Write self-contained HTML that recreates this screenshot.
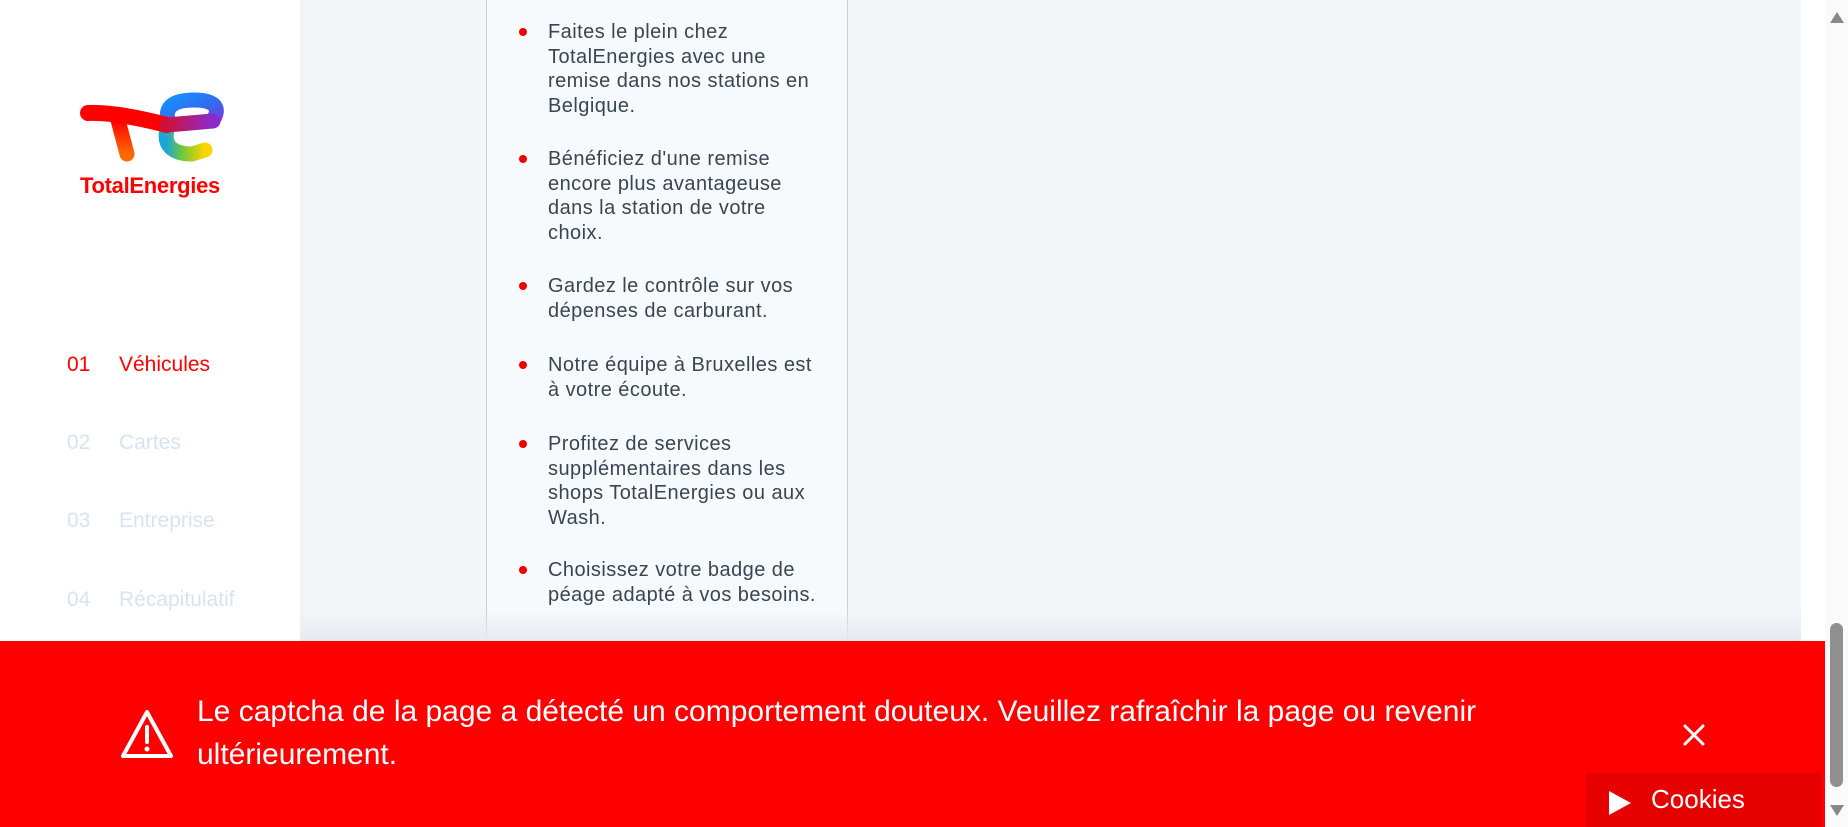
<!DOCTYPE html>
<html><head><meta charset="utf-8"><style>
*{margin:0;padding:0;box-sizing:border-box}
body{width:1848px;height:827px;overflow:hidden;position:relative;background:#fff;font-family:"Liberation Sans",Arial,sans-serif}
.side{position:absolute;left:0;top:0;width:300px;height:827px;background:#fff}
.main{position:absolute;left:300px;top:0;width:1501px;height:827px;background:#f3f6f9}
.col{position:absolute;left:486px;top:0;width:362px;height:660px;background:#f7fafc;border-left:1px solid #c5d3dc;border-right:1px solid #c5d3dc}
.it{position:absolute;left:548px;font-size:20px;letter-spacing:0.45px;line-height:24.5px;color:#3a4552;white-space:nowrap}
.dot{position:absolute;left:519px;width:8px;height:8px;border-radius:50%;background:#e00}
.step{position:absolute;font-size:21px;line-height:24px;color:#d7e3ee;white-space:nowrap}
.step.a{color:#f00}
.sb{position:absolute;left:1825px;top:0;width:23px;height:827px;background:#fafafa}
.ban{position:absolute;left:0;top:641px;width:1825px;height:186px;background:#f00}
.shade{position:absolute;left:300px;top:610px;width:1501px;height:31px;background:linear-gradient(#f3f6f900,#e6eaee)}
.msg{position:absolute;left:197px;top:690px;font-size:30px;line-height:43px;color:#fff;white-space:nowrap}
.ck{position:absolute;left:1586px;top:773px;width:235px;height:54px;background:#e60000;color:#fff;font-size:26px}
</style></head><body>
<div class="side">
<svg style="position:absolute;left:70px;top:85px" width="160" height="90" viewBox="70 85 160 90">
<defs>
<linearGradient id="g1" x1="0" y1="0" x2="0" y2="1"><stop offset="0" stop-color="#f00"/><stop offset="1" stop-color="#ff6a00"/></linearGradient>
<linearGradient id="g2" x1="0" y1="0" x2="1" y2="1"><stop offset="0" stop-color="#1a8cff"/><stop offset="0.5" stop-color="#2f6df0"/><stop offset="1" stop-color="#7a3bd6"/></linearGradient>
<linearGradient id="g3" x1="0" y1="0" x2="1" y2="0"><stop offset="0" stop-color="#1aa6d8"/><stop offset="0.4" stop-color="#6cc83c"/><stop offset="1" stop-color="#ffd400"/></linearGradient>
<linearGradient id="g4" x1="0" y1="0" x2="1" y2="0"><stop offset="0" stop-color="#d0103a"/><stop offset="1" stop-color="#8a2bd0"/></linearGradient>
</defs>
<path d="M169 124 C160 146 174 154 192 154 L205 150" fill="none" stroke="url(#g3)" stroke-width="15" stroke-linecap="round"/>
<path d="M169 124 C162 104 178 100 194 100 C212 100 222 106 213 120" fill="none" stroke="url(#g2)" stroke-width="15" stroke-linecap="round"/>
<path d="M118 120 L127 154" stroke="url(#g1)" stroke-width="15" stroke-linecap="round"/>
<path d="M88 113 C110 112 140 118 167 125" fill="none" stroke="#f00" stroke-width="16" stroke-linecap="round"/>
<path d="M167 125 L213 121" fill="none" stroke="url(#g4)" stroke-width="15" stroke-linecap="round"/>
</svg>
<div style="position:absolute;left:80px;top:173px;font-size:22px;font-weight:bold;color:#f00;letter-spacing:-0.3px">TotalEnergies</div>
<div class="step a" style="left:67px;top:353px">01</div><div class="step a" style="left:119px;top:353px">Véhicules</div>
<div class="step" style="left:67px;top:431px">02</div><div class="step" style="left:119px;top:431px">Cartes</div>
<div class="step" style="left:67px;top:509px">03</div><div class="step" style="left:119px;top:509px">Entreprise</div>
<div class="step" style="left:67px;top:588px">04</div><div class="step" style="left:119px;top:588px">Récapitulatif</div>
</div>
<div class="main"></div>
<div class="col"></div>
<div class="dot" style="top:28px"></div><div class="it" style="top:20px">Faites le plein chez<br>TotalEnergies avec une<br>remise dans nos stations en<br>Belgique.</div>
<div class="dot" style="top:155px"></div><div class="it" style="top:147px">Bénéficiez d'une remise<br>encore plus avantageuse<br>dans la station de votre<br>choix.</div>
<div class="dot" style="top:282px"></div><div class="it" style="top:274px">Gardez le contrôle sur vos<br>dépenses de carburant.</div>
<div class="dot" style="top:361px"></div><div class="it" style="top:353px">Notre équipe à Bruxelles est<br>à votre écoute.</div>
<div class="dot" style="top:440px"></div><div class="it" style="top:432px">Profitez de services<br>supplémentaires dans les<br>shops TotalEnergies ou aux<br>Wash.</div>
<div class="dot" style="top:566px"></div><div class="it" style="top:558px">Choisissez votre badge de<br>péage adapté à vos besoins.</div>
<div class="shade"></div>
<div class="sb">
<svg style="position:absolute;left:5px;top:12px" width="14" height="11"><path d="M7 0 L14 11 L0 11Z" fill="#888"/></svg>
<div style="position:absolute;left:5px;top:623px;width:13px;height:164px;border-radius:7px;background:#8f8f8f"></div>
<svg style="position:absolute;left:5px;top:805px" width="14" height="11"><path d="M0 0 L14 0 L7 11Z" fill="#888"/></svg>
</div>
<div class="ban">
<svg style="position:absolute;left:120px;top:68px" width="54" height="52" viewBox="0 0 54 52"><path d="M27 3 L51 47 L3 47 Z" fill="none" stroke="#fff" stroke-width="4" stroke-linejoin="round"/><path d="M27 18 L27 33" stroke="#fff" stroke-width="4" stroke-linecap="round"/><circle cx="27" cy="40" r="2.5" fill="#fff"/></svg>
<svg style="position:absolute;left:1683px;top:83px" width="22" height="22"><path d="M2 2 L20 20 M20 2 L2 20" stroke="#fff" stroke-width="3" stroke-linecap="round"/></svg>
</div>
<div class="msg">Le captcha de la page a détecté un comportement douteux. Veuillez rafraîchir la page ou revenir<br>ultérieurement.</div>
<div class="ck"><svg style="position:absolute;left:23px;top:18px" width="22" height="24"><path d="M0 0 L22 12 L0 24Z" fill="#fff"/></svg><span style="position:absolute;left:65px;top:11px">Cookies</span></div>
</body></html>
